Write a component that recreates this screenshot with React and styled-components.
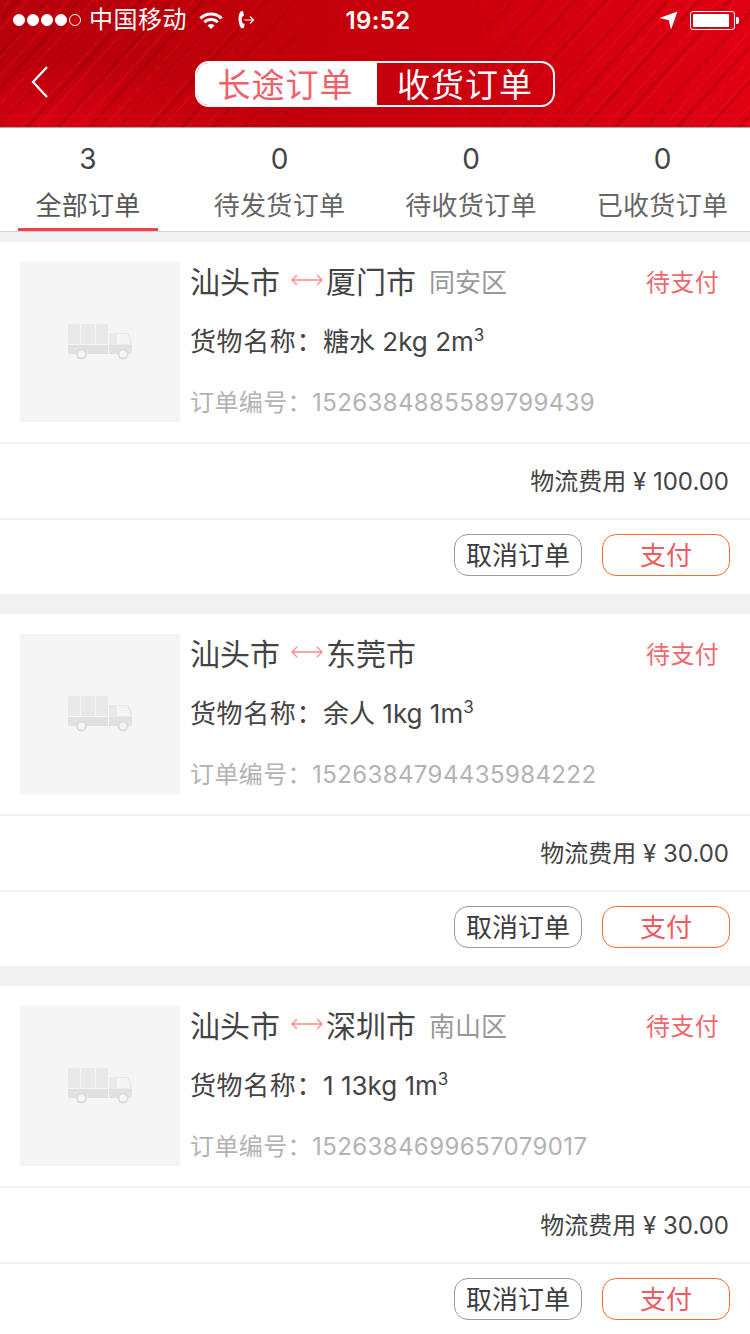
import React from 'react';
import styled, { createGlobalStyle } from 'styled-components';

const GlobalStyle = createGlobalStyle`
  html, body { margin: 0; padding: 0; background: #fff; }
  body { font-family: Inter, "Noto Sans CJK SC", sans-serif; color: #3d3d3d; }
  * { box-sizing: border-box; }
`;

const Page = styled.div`
  width: 750px;
  height: 1334px;
  overflow: hidden;
  background: #f2f2f4;
`;

const Header = styled.header`
  height: 128px;
  border-bottom: 1px solid #a8a8a8;
  color: #fff;
  position: relative;
  isolation: isolate;
  background:
    radial-gradient(ellipse 240px 70px at 50px 128px, rgba(235, 0, 22, 0.6), transparent),
    linear-gradient(90deg, #b8000b 0%, #c0000a 40%, #cc000e 62%, #e00012 100%);

  /* diagonal streaks, faded out behind the middle of the bar */
  &::before {
    content: '';
    position: absolute;
    inset: 0;
    z-index: -1;
    background:
      repeating-linear-gradient(132deg, transparent 0 7px, rgba(255, 50, 70, 0.22) 7px 8px, transparent 8px 19px, rgba(255, 30, 50, 0.2) 19px 21px, transparent 21px 31px),
      repeating-linear-gradient(132deg, transparent 0 12px, rgba(110, 0, 0, 0.22) 12px 15px, transparent 15px 23px);
    mask-image: linear-gradient(90deg, #000 0, #000 24%, transparent 46%, transparent 58%, #000 82%);
  }
`;

const StatusBar = styled.div`
  height: 40px;
  padding: 0 11px 0 13px;
  display: grid;
  grid-template-columns: 1fr auto 1fr;
  align-items: center;
`;

const StatusLeft = styled.div`
  display: flex;
  align-items: center;
`;

const StatusRight = styled.div`
  display: flex;
  align-items: center;
  justify-content: flex-end;
  gap: 12px;
  padding-right: 4px;
`;

const Signal = styled.div`
  display: flex;
  gap: 2px;
  margin-right: 8px;
`;

const Dot = styled.span`
  width: 12px;
  height: 12px;
  border-radius: 50%;
  border: 1px solid #fff;
  background: ${p => (p.$on ? '#fff' : 'transparent')};
`;

const Carrier = styled.span`
  font-size: 24px;
  line-height: 40px;
  letter-spacing: 0.5px;
  margin-right: 12px;
`;

const Clock = styled.span`
  font-size: 24px;
  font-weight: 600;
  letter-spacing: 0.4px;
  margin-left: 4px;
`;

const NavBar = styled.div`
  height: 87px;
  position: relative;
  display: flex;
  justify-content: center;
  padding-top: 21px;
`;

const BackButton = styled.button`
  position: absolute;
  left: 31px;
  top: 25px;
  padding: 0;
  border: 0;
  background: none;
  display: flex;
`;

const Segments = styled.div`
  width: 360px;
  height: 46px;
  display: flex;
  border: 2px solid #fff;
  border-radius: 14px;
  overflow: hidden;
`;

const Segment = styled.div`
  display: flex;
  align-items: center;
  justify-content: center;
  padding: 0 ${p => (p.$active ? '3px' : '0')} 3px 0;
  font-size: 33px;
  letter-spacing: 1px;
  width: ${p => (p.$active ? '180px' : '176px')};
  background: ${p => (p.$active ? '#fff' : 'transparent')};
  color: ${p => (p.$active ? '#f0606a' : '#fff')};
`;

const Tabs = styled.nav`
  height: 104px;
  background: #fff;
  border-bottom: 1px solid #d6d6d6;
  display: grid;
  grid-template-columns: repeat(4, 176px);
  column-gap: 15.5px;
`;

const Tab = styled.div`
  position: relative;
  display: flex;
  flex-direction: column;
  align-items: center;
  color: #444;
  padding-top: 12px;
`;

const TabCount = styled.span`
  font-size: 28px;
  line-height: 38px;
`;

const TabLabel = styled.span`
  font-size: 26px;
  line-height: 38px;
  margin-top: 9px;
  letter-spacing: 0.3px;
  color: ${p => (p.$active ? '#555' : '#666')};
`;

const TabLine = styled.span`
  position: absolute;
  left: 18px;
  width: 140px;
  bottom: 0;
  height: 3px;
  background: #f5404e;
`;

const Orders = styled.main`
  padding-top: 10px;
  display: flex;
  flex-direction: column;
  gap: 20px;
`;

const Card = styled.article`
  background: #fff;
  height: 352px;
  display: flex;
  flex-direction: column;
`;

const Summary = styled.div`
  height: 202px;
  padding: 20px 31px 0 20px;
  display: flex;
  gap: 10px;
  border-bottom: 2px solid #f2f2f2;
`;

const Thumb = styled.div`
  width: 160px;
  height: 160px;
  flex: none;
  background: #f5f5f5;
  display: flex;
  align-items: center;
  justify-content: center;
`;

const Details = styled.div`
  flex: 1;
  min-width: 0;
  display: flex;
  flex-direction: column;
`;

const RouteRow = styled.div`
  height: 44px;
  margin-top: -4px;
  display: flex;
  align-items: center;
`;

const City = styled.span`
  font-size: 30px;
  color: #444;
`;

const District = styled.span`
  font-size: 26px;
  color: #999;
  margin-left: 13px;
`;

const Status = styled.span`
  font-size: 24px;
  letter-spacing: 0.3px;
  color: #f0686e;
  margin-left: auto;
`;

const Goods = styled.div`
  height: 40px;
  margin-top: 20px;
  font-size: 26px;
  line-height: 40px;
  color: #444;
  display: flex;
  align-items: center;
  white-space: pre;

  sup {
    font-size: 17px;
    line-height: 1;
    align-self: flex-start;
    margin-top: 5px;
  }
`;

const GoodsLabel = styled.span`
  letter-spacing: 0.6px;
`;

const OrderNo = styled.div`
  margin-top: 21px;
  font-size: 24px;
  line-height: 40px;
  letter-spacing: 0.4px;
  color: #b3b3b3;
  white-space: pre;
`;

const FeeRow = styled.div`
  height: 76px;
  padding: 0 21px 3px 0;
  display: flex;
  align-items: center;
  justify-content: flex-end;
  font-size: 24px;
  color: #444;
  white-space: pre;
  border-bottom: 2px solid #f2f2f2;
`;

const Actions = styled.div`
  flex: 1;
  padding: 14px 20px 0 0;
  display: flex;
  justify-content: flex-end;
  align-items: flex-start;
  gap: 20px;
`;

const ActionButton = styled.button`
  width: 128px;
  height: 42px;
  padding: 2px 0 0;
  border-radius: 14px;
  background: #fff;
  font-family: inherit;
  font-size: 26px;
  line-height: 1;
  color: ${p => (p.$primary ? '#ee5a62' : '#3d3d3d')};
  border: 1px solid ${p => (p.$primary ? '#fb6a2c' : '#9b9b9b')};
`;

const Battery = styled.div`
  width: 45px;
  height: 19px;
  padding: 2px 5px 2px 2px;
  border: 1px solid #fff;
  border-radius: 3px;
  position: relative;
  display: flex;

  &::before {
    content: '';
    flex: 1;
    background: #fff;
    border-radius: 1px;
  }

  &::after {
    content: '';
    position: absolute;
    right: -5px;
    top: 5px;
    width: 3px;
    height: 7px;
    background: #fff;
    border-radius: 0 2px 2px 0;
  }
`;

const WifiIcon = () => (
  <svg width="24" height="18" viewBox="0 0 24 18">
    <path d="M12 18L8.5 14.5A5 5 0 0 1 15.5 14.5Z" fill="#fff" />
    <path d="M5.3 11.3A9.5 9.5 0 0 1 18.7 11.3M1.4 7.4A15 15 0 0 1 22.6 7.4" fill="none" stroke="#fff" strokeWidth="3" />
  </svg>
);

const CallIcon = () => (
  <svg width="18" height="20" viewBox="0 0 18 20" fill="none" style={{ marginLeft: 14 }}>
    <path d="M3.5 1.5L6 1l1 4.5L5 7c-.4 2-.4 4 .5 6l2 1-.5 4-2.5.5C1 14 .5 6 3.5 1.5z" fill="#fff" />
    <path d="M7.5 10h9M13 6.5l3.5 3.5-3.5 3.5" stroke="#fff" strokeWidth="1.2" />
  </svg>
);

const LocationIcon = () => (
  <svg width="19" height="19" viewBox="0 0 19 19" fill="#fff">
    <path d="M18.5 0.5L12 18.5l-2.2-9.3L0.5 7z" />
  </svg>
);

const TruckIcon = () => (
  <svg width="64" height="36" viewBox="0 0 64 36">
    <g fill="#e9e9e9">
      <rect x="0" y="0" width="12" height="20" rx="1" />
      <rect x="13" y="0" width="14" height="20" rx="1" />
      <rect x="28" y="0" width="12" height="20" rx="1" />
    </g>
    <path d="M41 9h20l3 8v3H41z" fill="#e9e9e9" />
    <path d="M49 10h10.5l2.5 8v2H49z" fill="#f5f5f5" />
    <path d="M0 21h40v9H2a2 2 0 0 1-2-2zM41 20.5h23V28a2 2 0 0 1-2 2H41z" fill="#e1e1e1" />
    <circle cx="13.5" cy="30" r="4.5" fill="#f5f5f5" stroke="#dcdcdc" strokeWidth="2" />
    <circle cx="55" cy="30" r="4.5" fill="#f5f5f5" stroke="#dcdcdc" strokeWidth="2" />
  </svg>
);

const RouteArrow = () => (
  <svg width="32" height="14" viewBox="0 0 32 14" fill="none" stroke="#f88" strokeWidth="1.3" style={{ margin: '0 3px 0 11px' }}>
    <path d="M1 7h30M6 2L1 7l5 5M26 2l5 5-5 5" />
  </svg>
);

const BackIcon = () => (
  <svg width="18" height="34" viewBox="0 0 18 34" fill="none" stroke="#fff" strokeWidth="2.2">
    <path d="M16 2L2 17l14 15" />
  </svg>
);

const tabs = [
  { count: 3, label: '全部订单', active: true },
  { count: 0, label: '待发货订单' },
  { count: 0, label: '待收货订单' },
  { count: 0, label: '已收货订单' },
];

const orders = [
  { to: '厦门市', district: '同安区', goods: '糖水 2kg 2m', no: '1526384885589799439', fee: '100.00' },
  { to: '东莞市', goods: '余人 1kg 1m', no: '1526384794435984222', fee: '30.00' },
  { to: '深圳市', district: '南山区', goods: '1 13kg 1m', no: '1526384699657079017', fee: '30.00' },
];

export default function App() {
  return (
    <Page>
      <GlobalStyle />
      <Header>
        <StatusBar>
          <StatusLeft>
            <Signal>
              {[1, 1, 1, 1, 0].map((on, i) => <Dot key={i} $on={!!on} />)}
            </Signal>
            <Carrier>中国移动</Carrier>
            <WifiIcon />
            <CallIcon />
          </StatusLeft>
          <Clock>19:52</Clock>
          <StatusRight>
            <LocationIcon />
            <Battery />
          </StatusRight>
        </StatusBar>
        <NavBar>
          <BackButton aria-label="返回"><BackIcon /></BackButton>
          <Segments>
            <Segment $active>长途订单</Segment>
            <Segment>收货订单</Segment>
          </Segments>
        </NavBar>
      </Header>
      <Tabs>
        {tabs.map(t => (
          <Tab key={t.label}>
            <TabCount>{t.count}</TabCount>
            <TabLabel $active={t.active}>{t.label}</TabLabel>
            {t.active && <TabLine />}
          </Tab>
        ))}
      </Tabs>
      <Orders>
        {orders.map(o => (
          <Card key={o.no}>
            <Summary>
              <Thumb><TruckIcon /></Thumb>
              <Details>
                <RouteRow>
                  <City>汕头市</City>
                  <RouteArrow />
                  <City>{o.to}</City>
                  {o.district && <District>{o.district}</District>}
                  <Status>待支付</Status>
                </RouteRow>
                <Goods><GoodsLabel>货物名称：</GoodsLabel>{o.goods}<sup>3</sup></Goods>
                <OrderNo>订单编号：{o.no}</OrderNo>
              </Details>
            </Summary>
            <FeeRow>物流费用 ¥ {o.fee}</FeeRow>
            <Actions>
              <ActionButton>取消订单</ActionButton>
              <ActionButton $primary>支付</ActionButton>
            </Actions>
          </Card>
        ))}
      </Orders>
    </Page>
  );
}
